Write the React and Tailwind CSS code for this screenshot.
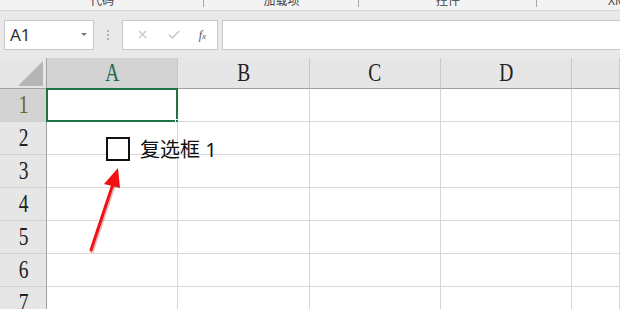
import { Check, X } from 'lucide-react'

const columns = ['A', 'B', 'C', 'D', '']
const rows = [1, 2, 3, 4, 5, 6, 7]

const ribbonGroups = [
  { label: '代码', width: 'w-[204px]' },
  { label: '加载项', width: 'w-[155px]' },
  { label: '控件', width: 'w-[178px]' },
  { label: 'XML', width: 'w-[166px]' },
]

const headerFont = { fontFamily: '"Liberation Serif", "Noto Serif", serif' }

function RibbonStrip() {
  return (
    <div className="flex h-[11px] overflow-hidden border-b border-[#d5d5d5] bg-[#f3f3f3]">
      {ribbonGroups.map((group) => (
        <div key={group.label} className={`relative flex shrink-0 justify-center ${group.width}`}>
          <span className="-mt-[6px] text-[12px] leading-[14px] text-[#444]">{group.label}</span>
          <div className="absolute right-0 top-0 h-[7px] w-px bg-[#a8a8a8]" />
        </div>
      ))}
    </div>
  )
}

function FormulaBar() {
  return (
    <div className="flex h-[47px] items-center bg-[#e9e9e9] pl-[4px]">
      <div className="flex h-[30px] w-[90px] items-center justify-between border border-[#c8c8c8] bg-white pl-[5px] pr-[6px]">
        <span className="text-[17px] text-[#333]">A1</span>
        <span className="h-0 w-0 border-x-[3px] border-t-[3px] border-x-transparent border-t-[#777]" />
      </div>
      <div className="flex w-[28px] flex-col items-center gap-[2px]">
        <span className="h-[2px] w-[2px] bg-[#b0b0b0]" />
        <span className="h-[2px] w-[2px] bg-[#b0b0b0]" />
        <span className="h-[2px] w-[2px] bg-[#b0b0b0]" />
      </div>
      <div className="flex h-[30px] w-[96px] items-center justify-around border border-[#c8c8c8] bg-white pl-[4px] pr-[2px]">
        <X className="h-[13px] w-[13px] text-[#c4c4c4]" strokeWidth={2} />
        <Check className="h-[14px] w-[14px] text-[#c4c4c4]" strokeWidth={2.5} />
        <span className="text-[12px] italic text-[#555]" style={headerFont}>
          f<span className="text-[9px]">x</span>
        </span>
      </div>
      <div className="ml-[4px] h-[30px] flex-1 border border-r-0 border-[#c8c8c8] bg-white" />
    </div>
  )
}

function HeaderLabel({ children, className = '' }) {
  return (
    <span className={`inline-block scale-x-75 text-[26px] leading-none ${className}`} style={headerFont}>
      {children}
    </span>
  )
}

function Sheet() {
  return (
    <div className="relative">
      <div className="grid grid-cols-[47px_131px_132px_131px_131px_1fr]">
        <div className="relative h-[31px] border-b border-r border-[#a0a0a0] bg-[#e6e6e6]">
          <svg className="absolute right-[3px] bottom-[2px]" width="25" height="25" viewBox="0 0 25 25">
            <polygon points="0,25 25,25 25,0" fill="#b5b5b5" />
          </svg>
        </div>
        {columns.map((col, i) => (
          <div
            key={`h-${i}`}
            className={`flex h-[31px] items-center justify-center border-b border-r border-b-[#a0a0a0] border-r-[#c8c8c8] ${
              i === 0 ? 'bg-[#d3d3d3]' : 'bg-[#e6e6e6]'
            }`}
          >
            <HeaderLabel className={i === 0 ? 'text-[#1d6b52]' : 'text-[#222]'}>{col}</HeaderLabel>
          </div>
        ))}

        {rows.map((row) => (
          <div key={`r-${row}`} className="contents">
            <div
              className={`flex h-[33px] items-center justify-center border-b border-r border-b-[#cfcfcf] border-r-[#a0a0a0] ${
                row === 1 ? 'bg-[#d3d3d3]' : 'bg-[#e6e6e6]'
              }`}
            >
              <HeaderLabel className={row === 1 ? 'text-[#6f6426]' : 'text-[#222]'}>{row}</HeaderLabel>
            </div>
            {columns.map((_, i) => (
              <div key={`c-${row}-${i}`} className="relative h-[33px] border-b border-r border-[#d6d6d6] bg-white">
                {row === 1 && i === 0 && (
                  <>
                    <div className="absolute -left-px -top-px -bottom-px -right-px border-2 border-[#217346]" />
                    <div className="absolute -bottom-[4px] -right-[4px] h-[6px] w-[6px] border border-white bg-[#217346]" />
                  </>
                )}
              </div>
            ))}
          </div>
        ))}
      </div>

      {/* floating form control */}
      <div className="absolute left-[106px] top-[79px] flex items-center gap-[10px]">
        <div className="h-[24px] w-[24px] border-2 border-[#111] bg-white" />
        <span
          className="mt-[1px] text-[20px] leading-none text-[#111]"
          style={{ fontFamily: '"Noto Sans", "Noto Sans CJK SC", sans-serif' }}
        >
          复选框 1
        </span>
      </div>

      {/* annotation arrow */}
      <svg className="absolute left-0 top-0" width="200" height="251" viewBox="0 0 200 251">
        <line x1="91" y1="192" x2="114" y2="123" stroke="#8a0000" strokeOpacity="0.25" strokeWidth="4" strokeLinecap="round" transform="translate(1,1)" />
        <line x1="91" y1="192" x2="114" y2="123" stroke="#f01212" strokeWidth="3" strokeLinecap="round" />
        <polygon points="118,110 104,126 120,130" fill="#f01212" />
      </svg>
    </div>
  )
}

export default function App() {
  return (
    <div className="h-[309px] w-[620px] overflow-hidden bg-white" style={{ fontFamily: '"Noto Sans", "Noto Sans CJK SC", sans-serif' }}>
      <RibbonStrip />
      <FormulaBar />
      <Sheet />
    </div>
  )
}
